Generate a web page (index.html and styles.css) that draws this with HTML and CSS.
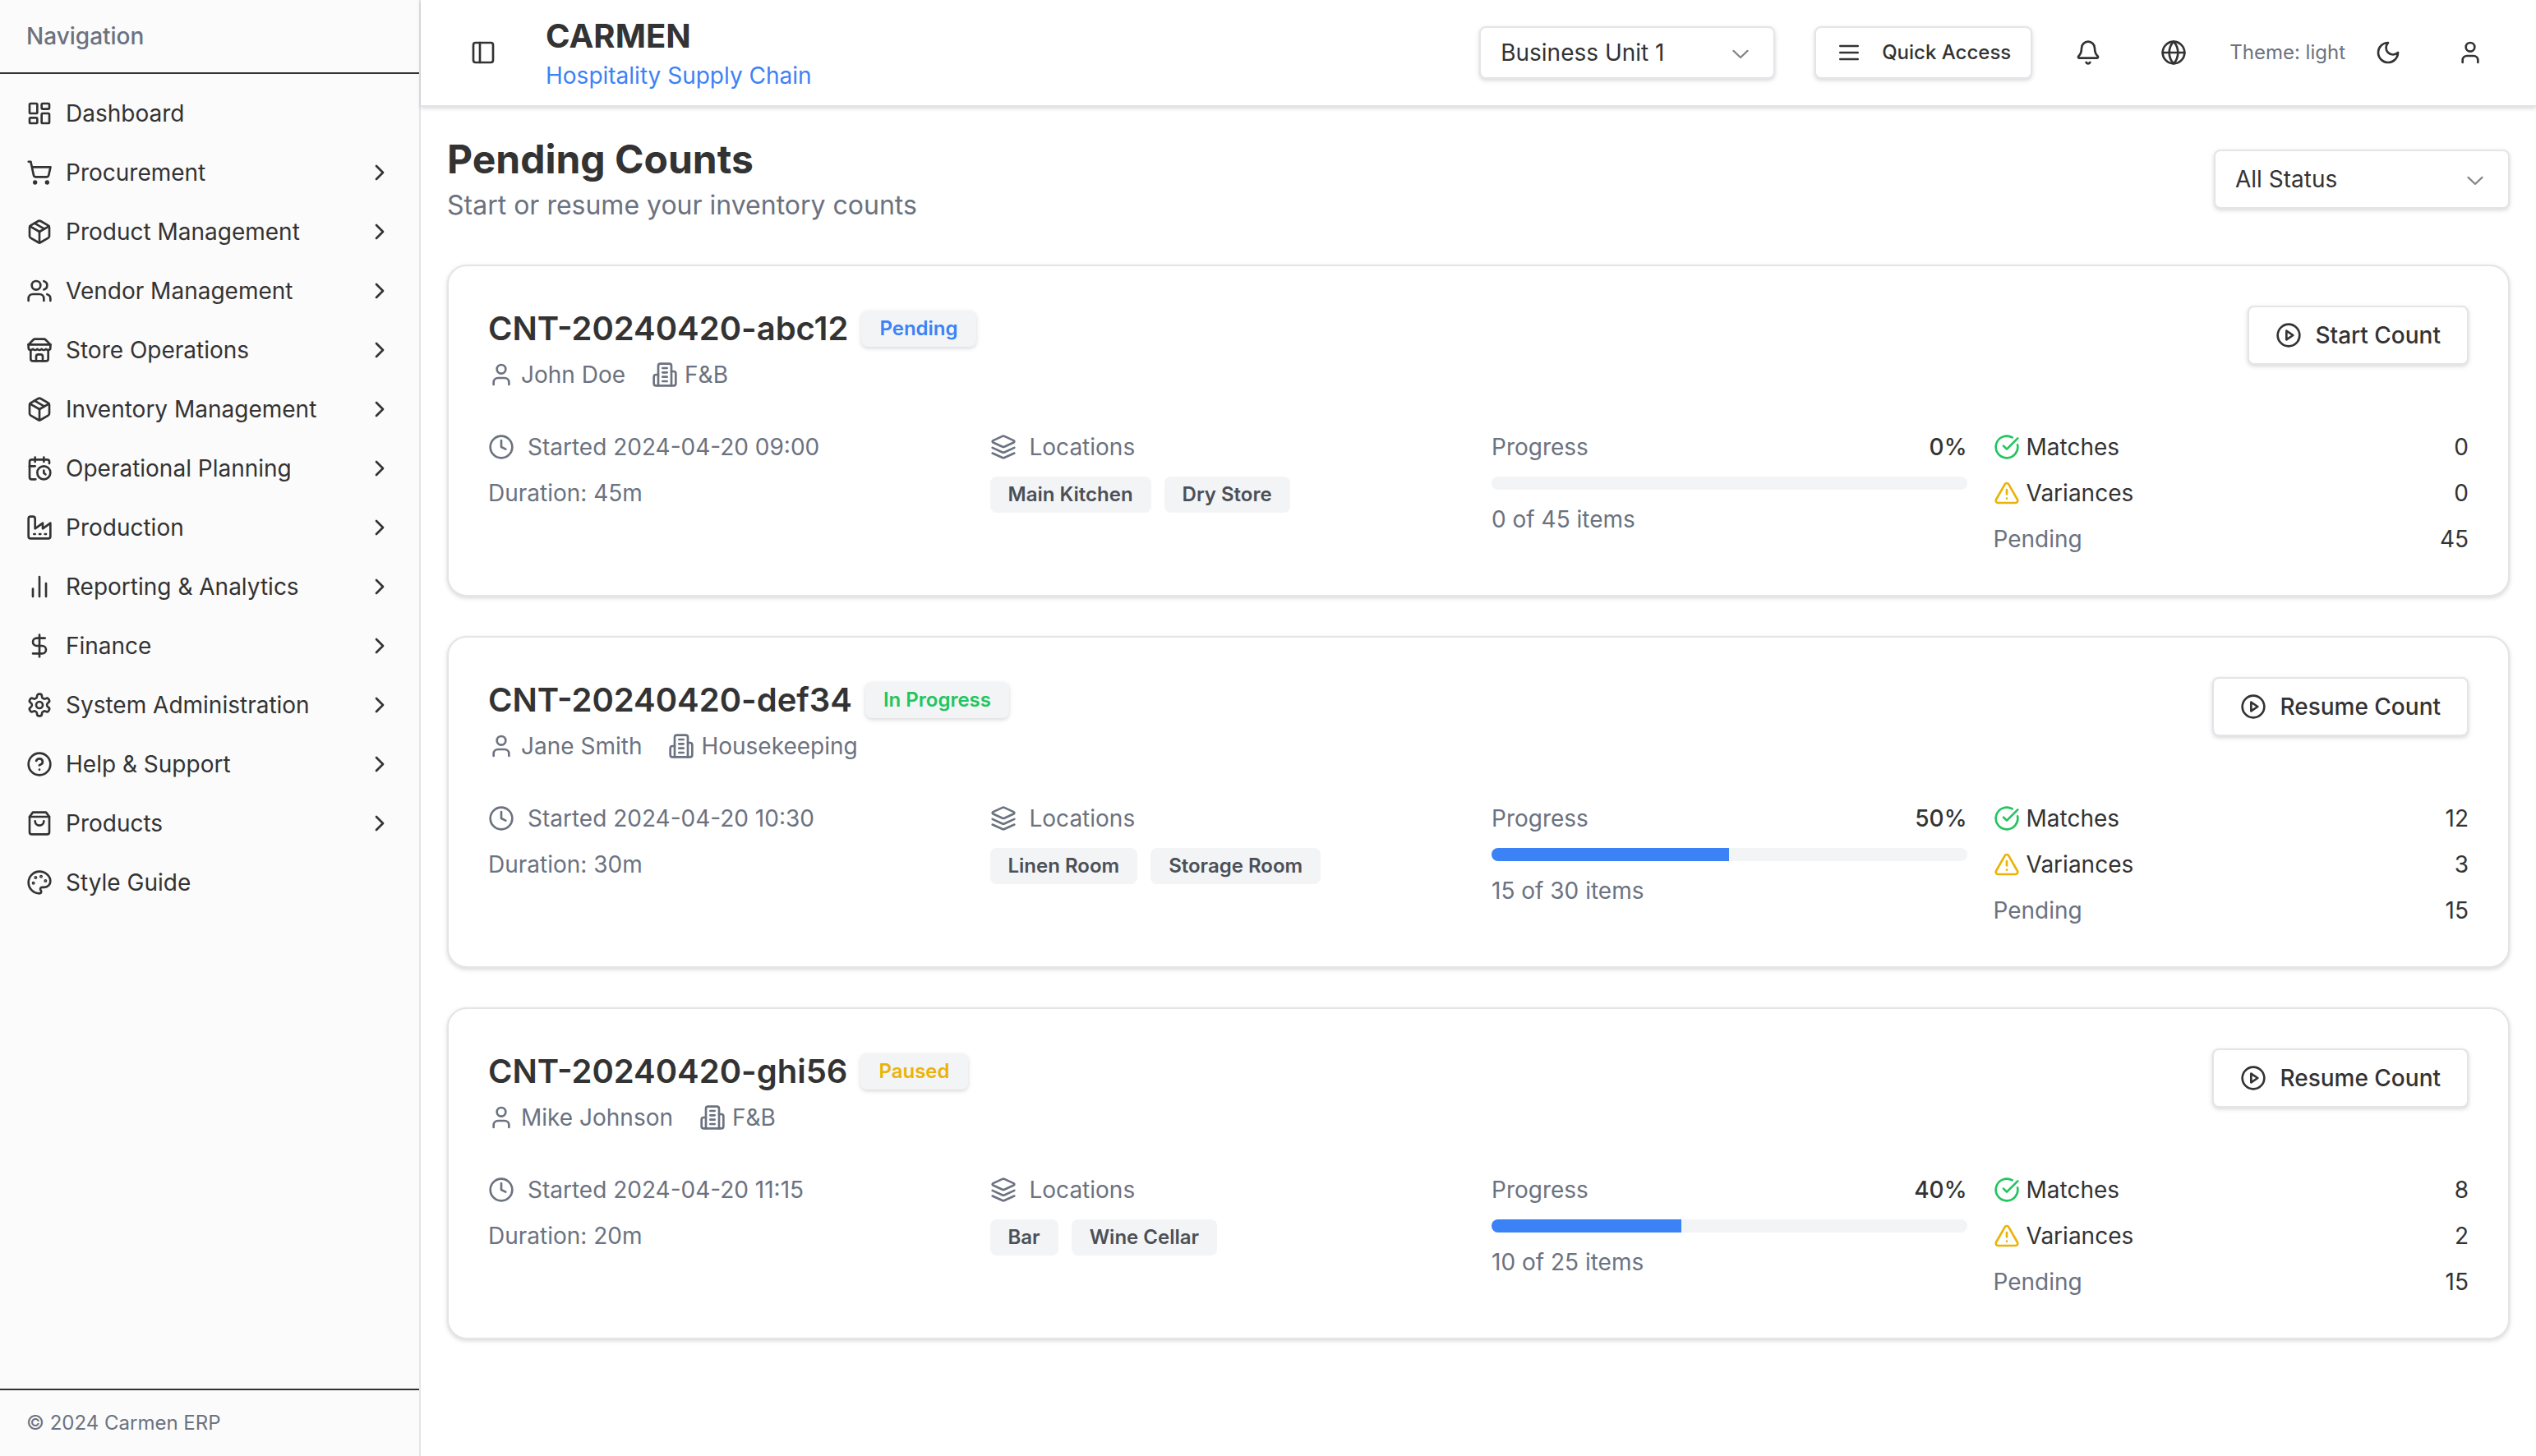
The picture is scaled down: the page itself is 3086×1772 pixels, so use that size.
FILE: index.html
```html
<!DOCTYPE html>
<html lang="en">
<head>
<meta charset="utf-8">
<title>Carmen ERP - Pending Counts</title>
<meta name="viewport" content="width=device-width, initial-scale=1">
<link rel="stylesheet" href="styles.css">
</head>
<body>
<svg class="sprite" aria-hidden="true">
  <symbol id="i-dashboard" viewBox="0 0 24 24"><rect width="7" height="9" x="3" y="3" rx="1"/><rect width="7" height="5" x="14" y="3" rx="1"/><rect width="7" height="9" x="14" y="12" rx="1"/><rect width="7" height="5" x="3" y="16" rx="1"/></symbol>
  <symbol id="i-cart" viewBox="0 0 24 24"><circle cx="8" cy="21" r="1"/><circle cx="19" cy="21" r="1"/><path d="M2.05 2.05h2l2.66 12.42a2 2 0 0 0 2 1.58h9.78a2 2 0 0 0 1.95-1.57l1.65-7.43H5.12"/></symbol>
  <symbol id="i-package" viewBox="0 0 24 24"><path d="m7.5 4.27 9 5.15"/><path d="M21 8a2 2 0 0 0-1-1.73l-7-4a2 2 0 0 0-2 0l-7 4A2 2 0 0 0 3 8v8a2 2 0 0 0 1 1.73l7 4a2 2 0 0 0 2 0l7-4A2 2 0 0 0 21 16Z"/><path d="m3.3 7 8.7 5 8.7-5"/><path d="M12 22V12"/></symbol>
  <symbol id="i-users" viewBox="0 0 24 24"><path d="M16 21v-2a4 4 0 0 0-4-4H6a4 4 0 0 0-4 4v2"/><circle cx="9" cy="7" r="4"/><path d="M22 21v-2a4 4 0 0 0-3-3.87"/><path d="M16 3.13a4 4 0 0 1 0 7.75"/></symbol>
  <symbol id="i-store" viewBox="0 0 24 24"><path d="m2 7 4.41-4.41A2 2 0 0 1 7.83 2h8.34a2 2 0 0 1 1.42.59L22 7"/><path d="M4 12v8a2 2 0 0 0 2 2h12a2 2 0 0 0 2-2v-8"/><path d="M15 22v-4a2 2 0 0 0-2-2h-2a2 2 0 0 0-2 2v4"/><path d="M2 7h20"/><path d="M22 7v3a2 2 0 0 1-2 2a2.7 2.7 0 0 1-1.59-.63.7.7 0 0 0-.82 0A2.7 2.7 0 0 1 16 12a2.7 2.7 0 0 1-1.59-.63.7.7 0 0 0-.82 0A2.7 2.7 0 0 1 12 12a2.7 2.7 0 0 1-1.59-.63.7.7 0 0 0-.82 0A2.7 2.7 0 0 1 8 12a2.7 2.7 0 0 1-1.59-.63.7.7 0 0 0-.82 0A2.7 2.7 0 0 1 4 12a2 2 0 0 1-2-2V7"/></symbol>
  <symbol id="i-calendar" viewBox="0 0 24 24"><path d="M21 7.5V6a2 2 0 0 0-2-2H5a2 2 0 0 0-2 2v14a2 2 0 0 0 2 2h3.5"/><path d="M16 2v4"/><path d="M8 2v4"/><path d="M3 10h5"/><path d="M17.5 17.5 16 16.3V14"/><circle cx="16" cy="16" r="6"/></symbol>
  <symbol id="i-factory" viewBox="0 0 24 24"><path d="M2 20a2 2 0 0 0 2 2h16a2 2 0 0 0 2-2V8l-7 5V8l-7 5V4a2 2 0 0 0-2-2H4a2 2 0 0 0-2 2Z"/><path d="M17 18h1"/><path d="M12 18h1"/><path d="M7 18h1"/></symbol>
  <symbol id="i-chart" viewBox="0 0 24 24"><path d="M12 21V3"/><path d="M18 21V9"/><path d="M6 21v-7"/></symbol>
  <symbol id="i-dollar" viewBox="0 0 24 24"><path d="M12 2v20"/><path d="M17 5H9.5a3.5 3.5 0 0 0 0 7h5a3.5 3.5 0 0 1 0 7H6"/></symbol>
  <symbol id="i-settings" viewBox="0 0 24 24"><path d="M12.22 2h-.44a2 2 0 0 0-2 2v.18a2 2 0 0 1-1 1.73l-.43.25a2 2 0 0 1-2 0l-.15-.08a2 2 0 0 0-2.73.73l-.22.38a2 2 0 0 0 .73 2.73l.15.1a2 2 0 0 1 1 1.72v.51a2 2 0 0 1-1 1.74l-.15.09a2 2 0 0 0-.73 2.73l.22.38a2 2 0 0 0 2.73.73l.15-.08a2 2 0 0 1 2 0l.43.25a2 2 0 0 1 1 1.73V20a2 2 0 0 0 2 2h.44a2 2 0 0 0 2-2v-.18a2 2 0 0 1 1-1.73l.43-.25a2 2 0 0 1 2 0l.15.08a2 2 0 0 0 2.73-.73l.22-.39a2 2 0 0 0-.73-2.73l-.15-.08a2 2 0 0 1-1-1.74v-.5a2 2 0 0 1 1-1.74l.15-.09a2 2 0 0 0 .73-2.73l-.22-.38a2 2 0 0 0-2.73-.73l-.15.08a2 2 0 0 1-2 0l-.43-.25a2 2 0 0 1-1-1.73V4a2 2 0 0 0-2-2z"/><circle cx="12" cy="12" r="3"/></symbol>
  <symbol id="i-help" viewBox="0 0 24 24"><circle cx="12" cy="12" r="10"/><path d="M9.09 9a3 3 0 0 1 5.83 1c0 2-3 3-3 3"/><path d="M12 17h.01"/></symbol>
  <symbol id="i-bag" viewBox="0 0 24 24"><path d="M6 2 3 6v14a2 2 0 0 0 2 2h14a2 2 0 0 0 2-2V6l-3-4Z"/><path d="M3 6h18"/><path d="M16 10a4 4 0 0 1-8 0"/></symbol>
  <symbol id="i-palette" viewBox="0 0 24 24"><circle cx="13.5" cy="6.5" r=".5" fill="currentColor"/><circle cx="17.5" cy="10.5" r=".5" fill="currentColor"/><circle cx="8.5" cy="7.5" r=".5" fill="currentColor"/><circle cx="6.5" cy="12.5" r=".5" fill="currentColor"/><path d="M12 2C6.5 2 2 6.5 2 12s4.5 10 10 10c.926 0 1.648-.746 1.648-1.688 0-.437-.18-.835-.437-1.125-.29-.289-.438-.652-.438-1.125a1.64 1.64 0 0 1 1.668-1.668h1.996c3.051 0 5.555-2.503 5.555-5.554C21.965 6.012 17.461 2 12 2z"/></symbol>
  <symbol id="i-chevron" viewBox="0 0 24 24"><path d="m9 18 6-6-6-6"/></symbol>
  <symbol id="i-panel" viewBox="0 0 24 24"><rect width="18" height="18" x="3" y="3" rx="2"/><path d="M9 3v18"/></symbol>
  <symbol id="i-menu" viewBox="0 0 24 24"><path d="M4 12h16"/><path d="M4 6h16"/><path d="M4 18h16"/></symbol>
  <symbol id="i-bell" viewBox="0 0 24 24"><path d="M10.268 21a2 2 0 0 0 3.464 0"/><path d="M3.262 15.326A1 1 0 0 0 4 17h16a1 1 0 0 0 .74-1.673C19.41 13.956 18 12.499 18 8A6 6 0 0 0 6 8c0 4.499-1.411 5.956-2.738 7.326"/></symbol>
  <symbol id="i-globe" viewBox="0 0 24 24"><circle cx="12" cy="12" r="10"/><path d="M12 2a14.5 14.5 0 0 0 0 20 14.5 14.5 0 0 0 0-20"/><path d="M2 12h20"/></symbol>
  <symbol id="i-moon" viewBox="0 0 24 24"><path d="M12 3a6 6 0 0 0 9 9 9 9 0 1 1-9-9Z"/></symbol>
  <symbol id="i-user" viewBox="0 0 24 24"><path d="M19 21v-2a4 4 0 0 0-4-4H9a4 4 0 0 0-4 4v2"/><circle cx="12" cy="7" r="4"/></symbol>
  <symbol id="i-building" viewBox="0 0 24 24"><path d="M6 22V4a2 2 0 0 1 2-2h8a2 2 0 0 1 2 2v18Z"/><path d="M6 12H4a2 2 0 0 0-2 2v6a2 2 0 0 0 2 2h2"/><path d="M18 9h2a2 2 0 0 1 2 2v9a2 2 0 0 1-2 2h-2"/><path d="M10 6h4"/><path d="M10 10h4"/><path d="M10 14h4"/><path d="M10 18h4"/></symbol>
  <symbol id="i-clock" viewBox="0 0 24 24"><circle cx="12" cy="12" r="10"/><path d="M12 6v6l4 2"/></symbol>
  <symbol id="i-layers" viewBox="0 0 24 24"><path d="m12.83 2.18a2 2 0 0 0-1.66 0L2.6 6.08a1 1 0 0 0 0 1.83l8.58 3.91a2 2 0 0 0 1.66 0l8.58-3.9a1 1 0 0 0 0-1.83Z"/><path d="m22 17.65-9.17 4.16a2 2 0 0 1-1.66 0L2 17.65"/><path d="m22 12.65-9.17 4.16a2 2 0 0 1-1.66 0L2 12.65"/></symbol>
  <symbol id="i-play" viewBox="0 0 24 24"><circle cx="12" cy="12" r="10"/><path d="m10 8 6 4-6 4Z"/></symbol>
  <symbol id="i-check" viewBox="0 0 24 24"><path d="M21.801 10A10 10 0 1 1 17 3.335"/><path d="m9 11 3 3L22 4"/></symbol>
  <symbol id="i-warning" viewBox="0 0 24 24"><path d="m21.73 18-8-14a2 2 0 0 0-3.48 0l-8 14A2 2 0 0 0 4 21h16a2 2 0 0 0 1.73-3"/><path d="M12 9v4"/><path d="M12 17h.01"/></symbol>
  <symbol id="i-caret" viewBox="0 0 15 15"><path d="M3.135 6.158a.5.5 0 0 1 .707-.023L7.5 9.565l3.658-3.43a.5.5 0 0 1 .684.73l-4 3.75a.5.5 0 0 1-.684 0l-4-3.75a.5.5 0 0 1-.023-.707Z" fill="currentColor" stroke="none"/></symbol>
</svg>

<div class="app">
  <aside class="sidebar">
    <h2 class="sidebar-title">Navigation</h2>
    <nav class="nav" aria-label="Main">
      <a class="nav-link" href="#"><svg class="icon"><use href="#i-dashboard"/></svg><span class="nav-label">Dashboard</span></a>
      <a class="nav-link" href="#"><svg class="icon"><use href="#i-cart"/></svg><span class="nav-label">Procurement</span><svg class="icon"><use href="#i-chevron"/></svg></a>
      <a class="nav-link" href="#"><svg class="icon"><use href="#i-package"/></svg><span class="nav-label">Product Management</span><svg class="icon"><use href="#i-chevron"/></svg></a>
      <a class="nav-link" href="#"><svg class="icon"><use href="#i-users"/></svg><span class="nav-label">Vendor Management</span><svg class="icon"><use href="#i-chevron"/></svg></a>
      <a class="nav-link" href="#"><svg class="icon"><use href="#i-store"/></svg><span class="nav-label">Store Operations</span><svg class="icon"><use href="#i-chevron"/></svg></a>
      <a class="nav-link" href="#"><svg class="icon"><use href="#i-package"/></svg><span class="nav-label">Inventory Management</span><svg class="icon"><use href="#i-chevron"/></svg></a>
      <a class="nav-link" href="#"><svg class="icon"><use href="#i-calendar"/></svg><span class="nav-label">Operational Planning</span><svg class="icon"><use href="#i-chevron"/></svg></a>
      <a class="nav-link" href="#"><svg class="icon"><use href="#i-factory"/></svg><span class="nav-label">Production</span><svg class="icon"><use href="#i-chevron"/></svg></a>
      <a class="nav-link" href="#"><svg class="icon"><use href="#i-chart"/></svg><span class="nav-label">Reporting &amp; Analytics</span><svg class="icon"><use href="#i-chevron"/></svg></a>
      <a class="nav-link" href="#"><svg class="icon"><use href="#i-dollar"/></svg><span class="nav-label">Finance</span><svg class="icon"><use href="#i-chevron"/></svg></a>
      <a class="nav-link" href="#"><svg class="icon"><use href="#i-settings"/></svg><span class="nav-label">System Administration</span><svg class="icon"><use href="#i-chevron"/></svg></a>
      <a class="nav-link" href="#"><svg class="icon"><use href="#i-help"/></svg><span class="nav-label">Help &amp; Support</span><svg class="icon"><use href="#i-chevron"/></svg></a>
      <a class="nav-link" href="#"><svg class="icon"><use href="#i-bag"/></svg><span class="nav-label">Products</span><svg class="icon"><use href="#i-chevron"/></svg></a>
      <a class="nav-link" href="#"><svg class="icon"><use href="#i-palette"/></svg><span class="nav-label">Style Guide</span></a>
    </nav>
    <footer class="sidebar-footer">© 2024 Carmen ERP</footer>
  </aside>

  <div class="page">
    <header class="topbar">
      <button class="icon-button toggle" type="button" aria-label="Toggle sidebar"><svg class="icon"><use href="#i-panel"/></svg></button>
      <a class="brand" href="#"><span class="brand-name">CARMEN</span><span class="brand-tagline">Hospitality Supply Chain</span></a>
      <div class="tools">
        <div class="select select-compact">
          <select class="select-input" aria-label="Business unit"><option>Business Unit 1</option><option>Business Unit 2</option></select>
          <svg class="icon select-caret"><use href="#i-caret"/></svg>
        </div>
        <button class="button button-small" type="button"><svg class="icon"><use href="#i-menu"/></svg>Quick Access</button>
        <button class="icon-button" type="button" aria-label="Notifications"><svg class="icon"><use href="#i-bell"/></svg></button>
        <button class="icon-button" type="button" aria-label="Language"><svg class="icon"><use href="#i-globe"/></svg></button>
        <div class="theme"><span>Theme: light</span><button class="icon-button" type="button" aria-label="Switch theme"><svg class="icon"><use href="#i-moon"/></svg></button></div>
        <button class="icon-button account" type="button" aria-label="Account"><svg class="icon"><use href="#i-user"/></svg></button>
      </div>
    </header>

    <main class="content">
      <div class="page-head">
        <div>
          <h1 class="page-title">Pending Counts</h1>
          <p class="page-subtitle">Start or resume your inventory counts</p>
        </div>
        <div class="select">
          <select class="select-input" aria-label="Status"><option>All Status</option><option>Pending</option><option>In Progress</option><option>Paused</option></select>
          <svg class="icon select-caret"><use href="#i-caret"/></svg>
        </div>
      </div>

      <article class="card">
        <div class="card-head">
          <div class="card-heading">
            <div class="title-row"><h2 class="card-title">CNT-20240420-abc12</h2><span class="badge pending">Pending</span></div>
            <div class="meta"><span class="meta-item"><svg class="icon"><use href="#i-user"/></svg>John Doe</span><span class="meta-item"><svg class="icon"><use href="#i-building"/></svg>F&amp;B</span></div>
          </div>
          <button class="button" type="button"><svg class="icon"><use href="#i-play"/></svg>Start Count</button>
        </div>
        <div class="card-grid">
          <div class="stack muted"><div class="line"><svg class="icon"><use href="#i-clock"/></svg>Started 2024-04-20 09:00</div><div>Duration: 45m</div></div>
          <div class="stack muted"><div class="line"><svg class="icon"><use href="#i-layers"/></svg>Locations</div><div class="chips"><span class="chip">Main Kitchen</span><span class="chip">Dry Store</span></div></div>
          <div class="stack muted"><div class="spread"><span>Progress</span><span class="percent">0%</span></div><div class="bar" role="progressbar" aria-label="Progress" aria-valuenow="0"><div class="bar-fill" style="width:0%"></div></div><div>0 of 45 items</div></div>
          <dl class="stack stats"><div class="spread"><dt class="stat"><svg class="icon ok"><use href="#i-check"/></svg>Matches</dt><dd>0</dd></div><div class="spread"><dt class="stat"><svg class="icon warn"><use href="#i-warning"/></svg>Variances</dt><dd>0</dd></div><div class="spread"><dt class="muted">Pending</dt><dd>45</dd></div></dl>
        </div>
      </article>

      <article class="card">
        <div class="card-head">
          <div class="card-heading">
            <div class="title-row"><h2 class="card-title">CNT-20240420-def34</h2><span class="badge in-progress">In Progress</span></div>
            <div class="meta"><span class="meta-item"><svg class="icon"><use href="#i-user"/></svg>Jane Smith</span><span class="meta-item"><svg class="icon"><use href="#i-building"/></svg>Housekeeping</span></div>
          </div>
          <button class="button" type="button"><svg class="icon"><use href="#i-play"/></svg>Resume Count</button>
        </div>
        <div class="card-grid">
          <div class="stack muted"><div class="line"><svg class="icon"><use href="#i-clock"/></svg>Started 2024-04-20 10:30</div><div>Duration: 30m</div></div>
          <div class="stack muted"><div class="line"><svg class="icon"><use href="#i-layers"/></svg>Locations</div><div class="chips"><span class="chip">Linen Room</span><span class="chip">Storage Room</span></div></div>
          <div class="stack muted"><div class="spread"><span>Progress</span><span class="percent">50%</span></div><div class="bar" role="progressbar" aria-label="Progress" aria-valuenow="50"><div class="bar-fill" style="width:50%"></div></div><div>15 of 30 items</div></div>
          <dl class="stack stats"><div class="spread"><dt class="stat"><svg class="icon ok"><use href="#i-check"/></svg>Matches</dt><dd>12</dd></div><div class="spread"><dt class="stat"><svg class="icon warn"><use href="#i-warning"/></svg>Variances</dt><dd>3</dd></div><div class="spread"><dt class="muted">Pending</dt><dd>15</dd></div></dl>
        </div>
      </article>

      <article class="card">
        <div class="card-head">
          <div class="card-heading">
            <div class="title-row"><h2 class="card-title">CNT-20240420-ghi56</h2><span class="badge paused">Paused</span></div>
            <div class="meta"><span class="meta-item"><svg class="icon"><use href="#i-user"/></svg>Mike Johnson</span><span class="meta-item"><svg class="icon"><use href="#i-building"/></svg>F&amp;B</span></div>
          </div>
          <button class="button" type="button"><svg class="icon"><use href="#i-play"/></svg>Resume Count</button>
        </div>
        <div class="card-grid">
          <div class="stack muted"><div class="line"><svg class="icon"><use href="#i-clock"/></svg>Started 2024-04-20 11:15</div><div>Duration: 20m</div></div>
          <div class="stack muted"><div class="line"><svg class="icon"><use href="#i-layers"/></svg>Locations</div><div class="chips"><span class="chip">Bar</span><span class="chip">Wine Cellar</span></div></div>
          <div class="stack muted"><div class="spread"><span>Progress</span><span class="percent">40%</span></div><div class="bar" role="progressbar" aria-label="Progress" aria-valuenow="40"><div class="bar-fill" style="width:40%"></div></div><div>10 of 25 items</div></div>
          <dl class="stack stats"><div class="spread"><dt class="stat"><svg class="icon ok"><use href="#i-check"/></svg>Matches</dt><dd>8</dd></div><div class="spread"><dt class="stat"><svg class="icon warn"><use href="#i-warning"/></svg>Variances</dt><dd>2</dd></div><div class="spread"><dt class="muted">Pending</dt><dd>15</dd></div></dl>
        </div>
      </article>
    </main>
  </div>
</div>
</body>
</html>
```
FILE: styles.css
```css
:root {
  --text: #333333;
  --muted: #6b7280;
  --border: #e4e4e9;
  --surface: #f3f4f6;
  --blue: #3b82f6;
  --green: #22c55e;
  --amber: #eab308;
  --shadow: 0 2px 6px rgba(0, 0, 0, 0.1), 0 2px 4px rgba(0, 0, 0, 0.06);
}

*, *::before, *::after { box-sizing: border-box; }

body {
  margin: 0;
  background: #ffffff;
  color: var(--text);
  font-family: Inter, "Liberation Sans", sans-serif;
  font-size: 28px;
  line-height: 40px;
}

h1, h2, p, dl, dd { margin: 0; }
a { color: inherit; text-decoration: none; }
button, select { font: inherit; color: inherit; }

.sprite { display: none; }

.icon {
  width: 32px;
  height: 32px;
  flex: none;
  fill: none;
  stroke: currentColor;
  stroke-width: 2;
  stroke-linecap: round;
  stroke-linejoin: round;
}

.app { display: flex; min-height: 100vh; }

/* Sidebar */
.sidebar {
  display: flex;
  flex-direction: column;
  flex: none;
  width: 512px;
  background: #fbfbfb;
  border-right: 2px solid var(--border);
}
.sidebar-title {
  padding: 24px 32px;
  border-bottom: 2px solid var(--text);
  color: var(--muted);
  font-size: 28px;
  font-weight: 500;
  line-height: 40px;
}
.nav {
  display: flex;
  flex: 1;
  flex-direction: column;
  gap: 8px;
  padding: 16px;
}
.nav-link {
  display: flex;
  align-items: center;
  gap: 16px;
  padding: 12px 16px;
  border-radius: 8px;
}
.nav-label { flex: 1; }
.sidebar-footer {
  padding: 24px 32px;
  border-top: 2px solid var(--text);
  color: var(--muted);
  font-size: 24px;
  line-height: 32px;
}

/* Top bar */
.page { flex: 1; min-width: 0; }
.topbar {
  display: flex;
  align-items: center;
  gap: 48px;
  padding: 16px 48px;
  border-bottom: 2px solid var(--border);
  box-shadow: var(--shadow);
}
.brand { display: flex; flex-direction: column; }
.brand-name { font-size: 40px; font-weight: 700; line-height: 56px; }
.brand-tagline { color: var(--blue); }
.tools { display: flex; align-items: center; gap: 32px; margin-left: auto; }
.theme {
  display: flex;
  align-items: center;
  gap: 16px;
  color: var(--muted);
  font-size: 24px;
}
.icon-button {
  display: flex;
  align-items: center;
  justify-content: center;
  width: 72px;
  height: 72px;
  padding: 0;
  border: 0;
  border-radius: 8px;
  background: none;
  color: var(--text);
}
.toggle { width: 56px; height: 56px; }
.account { width: 64px; height: 64px; }

.button {
  display: flex;
  align-items: center;
  gap: 16px;
  padding: 14px 32px;
  border: 2px solid var(--border);
  border-radius: 8px;
  background: #ffffff;
  box-shadow: var(--shadow);
  font-weight: 500;
}
.button-small {
  gap: 24px;
  padding: 14px 24px;
  font-size: 24px;
  line-height: 32px;
}

.select { position: relative; width: 360px; }
.select-compact { margin-right: 16px; }
.select-input {
  display: block;
  width: 100%;
  height: 72px;
  padding: 0 64px 0 24px;
  border: 2px solid var(--border);
  border-radius: 8px;
  background: #ffffff;
  box-shadow: var(--shadow);
  appearance: none;
}
.select-compact .select-input { height: 64px; }
.select-caret {
  position: absolute;
  top: calc(50% - 16px);
  right: 26px;
  opacity: 0.6;
  pointer-events: none;
}

/* Page content */
.content {
  display: flex;
  flex-direction: column;
  gap: 48px;
  padding: 32px;
}
.page-head { display: flex; align-items: center; justify-content: space-between; }
.page-title { font-size: 48px; font-weight: 700; line-height: 64px; }
.page-subtitle { color: var(--muted); font-size: 32px; line-height: 48px; }

.card {
  display: flex;
  flex-direction: column;
  gap: 48px;
  padding: 48px;
  border: 2px solid var(--border);
  border-radius: 24px;
  background: #ffffff;
  box-shadow: var(--shadow);
}
.card-head { display: flex; align-items: flex-start; justify-content: space-between; }
.card-heading { display: flex; flex-direction: column; gap: 8px; }
.title-row { display: flex; align-items: center; gap: 16px; }
.card-title { font-size: 40px; font-weight: 600; line-height: 56px; }
.badge, .chip {
  padding: 6px 22px;
  border-radius: 8px;
  background: var(--surface);
  font-size: 24px;
  font-weight: 600;
  line-height: 32px;
}
.badge { box-shadow: var(--shadow); }
.pending { color: var(--blue); }
.in-progress { color: var(--green); }
.paused { color: var(--amber); }

.meta { display: flex; gap: 32px; color: var(--muted); }
.meta-item { display: flex; align-items: center; gap: 8px; }

.card-grid { display: grid; grid-template-columns: repeat(4, 1fr); gap: 32px; }
.stack { display: flex; flex-direction: column; gap: 16px; }
.muted { color: var(--muted); }
.line { display: flex; align-items: center; gap: 16px; }
.spread { display: flex; align-items: center; justify-content: space-between; }
.percent { color: var(--text); font-weight: 500; }
.chips { display: flex; flex-wrap: wrap; gap: 16px; }
.chip { color: #4b5057; }

.bar { height: 16px; border-radius: 8px; background: var(--surface); overflow: hidden; }
.bar-fill { height: 100%; background: var(--blue); }

.stat { display: flex; align-items: center; gap: 8px; }
.ok { color: var(--green); }
.warn { color: var(--amber); }
```
